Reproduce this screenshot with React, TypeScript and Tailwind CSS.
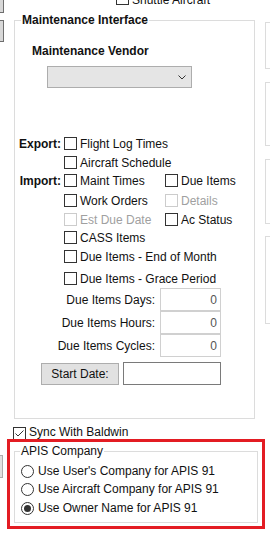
import React from 'react';

type BoxProps = { checked?: boolean; disabled?: boolean };

function CheckBox({ checked, disabled }: BoxProps) {
  return (
    <span
      className={`w-[13px] h-[13px] shrink-0 bg-white border flex items-center justify-center ${
        disabled ? 'border-[#cccccc]' : 'border-[#333333]'
      }`}
    >
      {checked && (
        <svg width="11" height="11" viewBox="0 0 11 11" fill="none" stroke="#333333" strokeWidth="1">
          <polyline points="1.5 5.5 4 8 9.5 2.5" />
        </svg>
      )}
    </span>
  );
}

function Check({ label, checked, disabled }: { label: string; checked?: boolean; disabled?: boolean }) {
  return (
    <div className="flex items-center gap-[3px]">
      <CheckBox checked={checked} disabled={disabled} />
      <span className={disabled ? 'text-[#a0a0a0]' : 'text-[#111111]'}>{label}</span>
    </div>
  );
}

function Radio({ label, selected }: { label: string; selected?: boolean }) {
  return (
    <div className="flex items-center h-[18px] gap-[4px] ml-[6px]">
      <span className="w-[13px] h-[13px] rounded-full border border-[#333333] bg-white flex items-center justify-center shrink-0">
        {selected && <span className="w-[7px] h-[7px] rounded-full bg-[#333333]" />}
      </span>
      <span>{label}</span>
    </div>
  );
}

function NumberField({ label }: { label: string }) {
  return (
    <div className="flex items-center h-[23px]">
      <span className="w-[140px] text-right">{label}</span>
      <div className="ml-[5px] w-[61px] h-[23px] border border-[#d0d0d0] bg-white flex items-center justify-end pr-[3px] text-[#555555]">
        0
      </div>
    </div>
  );
}

export default function App() {
  return (
    <div className="w-[270px] h-[540px] overflow-hidden bg-white text-[12px] leading-[16px] text-[#111111] font-['Liberation_Sans',Arial,sans-serif] flex flex-col">
      {/* Top section */}
      <div className="flex h-[419px] shrink-0">
        {/* Left edge strip */}
        <div className="w-[14px] shrink-0 flex flex-col gap-[7px]">
          <div className="w-[4px] h-[13px] bg-[#d8d8d8] border-r border-b border-[#6e6e6e]" />
          <div className="w-[4px] h-[22px] bg-[#d8d8d8] border border-l-0 border-[#6e6e6e]" />
        </div>

        {/* Main column */}
        <div className="w-[241px] shrink-0 flex flex-col">
          <div className="-mt-[8px] h-[13px] pl-[102px] flex items-end gap-[3px] leading-[13px]">
            <CheckBox />
            <span className="-mb-[2px]">Shuttle Aircraft</span>
          </div>

          <fieldset className="mt-[8px] flex-1 border border-[#dcdcdc] flex flex-col">
            <legend className="ml-[6px] px-[1px] font-bold leading-[14px]">Maintenance Interface</legend>

            <div className="mt-[16px] ml-[17px] font-bold">Maintenance Vendor</div>

            <div className="mt-[7px] ml-[32px] w-[145px] h-[22px] bg-[#e5e5e5] border border-[#adadad] flex items-center justify-end pr-[5px]">
              <svg width="8" height="5" viewBox="0 0 8 5" fill="none" stroke="#333333" strokeWidth="1">
                <polyline points="0.5 0.5 4 4 7.5 0.5" />
              </svg>
            </div>

            {/* Export / Import options */}
            <div className="mt-[46px] flex flex-col">
              <div className="flex h-[19px] items-center">
                <span className="w-[46px] text-right font-bold">Export:</span>
                <div className="ml-[3px]"><Check label="Flight Log Times" /></div>
              </div>
              <div className="flex h-[19px] items-center">
                <span className="w-[46px]" />
                <div className="ml-[3px]"><Check label="Aircraft Schedule" /></div>
              </div>
              <div className="-mt-[1px] flex h-[19px] items-center">
                <span className="w-[46px] text-right font-bold">Import:</span>
                <div className="ml-[3px] w-[101px]"><Check label="Maint Times" /></div>
                <Check label="Due Items" />
              </div>
              <div className="mt-[1px] flex h-[19px] items-center">
                <span className="w-[46px]" />
                <div className="ml-[3px] w-[101px]"><Check label="Work Orders" /></div>
                <Check label="Details" disabled />
              </div>
              <div className="flex h-[19px] items-center">
                <span className="w-[46px]" />
                <div className="ml-[3px] w-[101px]"><Check label="Est Due Date" disabled /></div>
                <Check label="Ac Status" />
              </div>
              <div className="-mt-[1px] flex h-[19px] items-center">
                <span className="w-[46px]" />
                <div className="ml-[3px]"><Check label="CASS Items" /></div>
              </div>
              <div className="flex h-[19px] items-center">
                <span className="w-[46px]" />
                <div className="ml-[3px]"><Check label="Due Items - End of Month" /></div>
              </div>
              <div className="mt-[3px] flex h-[19px] items-center">
                <span className="w-[46px]" />
                <div className="ml-[3px]"><Check label="Due Items - Grace Period" /></div>
              </div>
            </div>

            {/* Due item numbers */}
            <div className="flex flex-col">
              <NumberField label="Due Items Days:" />
              <NumberField label="Due Items Hours:" />
              <NumberField label="Due Items Cycles:" />
            </div>

            <div className="mt-[5px] flex items-center h-[23px]">
              <div className="ml-[26px] w-[78px] h-[22px] bg-[#e1e1e1] border border-[#adadad] flex items-center justify-center">
                Start Date:
              </div>
              <div className="ml-[4px] w-[98px] h-[23px] bg-white border border-[#7a7a7a]" />
            </div>
          </fieldset>
        </div>

        {/* Right edge group boxes */}
        <div className="ml-[10px] flex-1 flex flex-col pt-[22px]">
          <div className="h-[47px] border-l border-t border-b border-[#dcdcdc]" />
          <div className="mt-[13px] h-[64px] border-l border-t border-b border-[#dcdcdc]" />
          <div className="mt-[13px] h-[65px] border-l border-t border-b border-[#dcdcdc]" />
          <div className="mt-[12px] h-[88px] border-l border-t border-b border-[#dcdcdc]" />
        </div>
      </div>

      {/* Sync row */}
      <div className="mt-[8px] h-[12px] ml-[13px] flex items-start gap-[3px] leading-[13px]">
        <CheckBox checked />
        <span className="-mt-[1px]">Sync With Baldwin</span>
      </div>

      {/* APIS Company (highlighted) */}
      <div className="flex">
        <div className="mt-[16px] w-[3px] h-[23px] bg-[#e1e1e1] border-r border-t border-b border-[#adadad]" />
        <div className="ml-[4px] w-[258px] h-[90px] border-[3px] border-[#e31c23]">
          <fieldset className="mt-[2px] ml-[4px] w-[244px] h-[79px] border border-[#dcdcdc] flex flex-col">
            <legend className="ml-[5px] px-[1px] leading-[14px]">APIS Company</legend>
            <div className="mt-[4px] flex flex-col">
              <Radio label="Use User's Company for APIS 91" />
              <Radio label="Use Aircraft Company for APIS 91" />
              <div className="mt-[1px]">
                <Radio label="Use Owner Name for APIS 91" selected />
              </div>
            </div>
          </fieldset>
        </div>
      </div>
    </div>
  );
}
